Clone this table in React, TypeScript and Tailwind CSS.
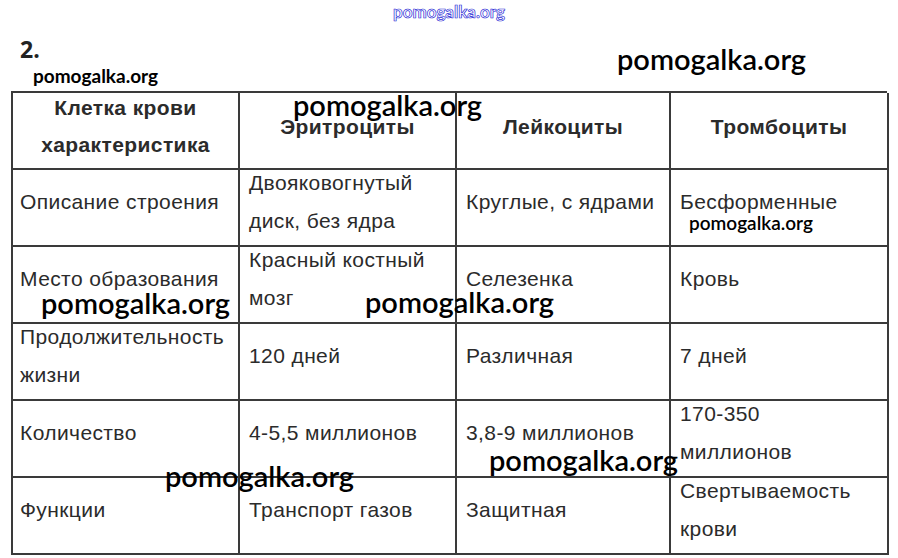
import React from 'react';

// each cell is a list of lines, wrapped as in the source document
const rows: string[][][] = [
  [['Описание строения'], ['Двояковогнутый', 'диск, без ядра'], ['Круглые, с ядрами'], ['Бесформенные']],
  [['Место образования'], ['Красный костный', 'мозг'], ['Селезенка'], ['Кровь']],
  [['Продолжительность', 'жизни'], ['120 дней'], ['Различная'], ['7 дней']],
  [['Количество'], ['4-5,5 миллионов'], ['3,8-9 миллионов'], ['170-350', 'миллионов']],
  [['Функции'], ['Транспорт газов'], ['Защитная'], ['Свертываемость', 'крови']],
];

const cell = 'flex h-[77px] border-b-2 border-r-2 border-[#3a3a3a]';
const body = "font-['Liberation_Sans',Arial,sans-serif] text-[21px] tracking-[0.4px] leading-[38px] text-[#2b2b2b]";
const head = "font-['Liberation_Sans',Arial,sans-serif] text-[21px] tracking-[0.4px] font-bold text-[#2b2b2b]";
const mark = "absolute font-['Lato',sans-serif] font-semibold text-black leading-none";

export default function App() {
  return (
    <div className="relative h-[558px] w-[898px] overflow-hidden bg-white">
      <div className="flex justify-center pt-[2px]">
        <span className="font-['Lato',sans-serif] text-[17px] font-bold leading-[20px] text-white [-webkit-text-stroke:0.7px_#2a2ad6]">
          pomogalka.org
        </span>
      </div>

      <div className="pl-[20px] pt-[14px] font-['Open_Sans',sans-serif] text-[23px] font-bold leading-[26px] text-[#222]">2.</div>
      <div className="pl-[33px] pt-[3px] font-['Lato',sans-serif] text-[19px] font-bold leading-[22px] text-black">pomogalka.org</div>

      <div className="ml-[11px] mt-[4px] grid w-[876px] grid-cols-[227px_217px_214px_218px] border-l-2 border-t-2 border-[#3a3a3a]">
        <div className={cell + ' flex-col items-center justify-center pb-[10px] leading-[37px] ' + head}>
          <span>Клетка крови</span>
          <span>характеристика</span>
        </div>
        {['Эритроциты', 'Лейкоциты', 'Тромбоциты'].map((h) => (
          <div key={h} className={cell + ' items-center justify-center pb-[8px] ' + head}>
            {h}
          </div>
        ))}
        {rows.map((r, i) =>
          r.map((lines, j) => (
            <div
              key={i + '-' + j}
              className={cell + ' flex-col justify-center pb-[12px] ' + (j === 0 ? 'pl-[7px] ' : 'pl-[9px] ') + body}
            >
              {lines.map((l) => (
                <span key={l} className="whitespace-nowrap">
                  {l}
                </span>
              ))}
            </div>
          ))
        )}
      </div>

      <span className={mark + ' left-[617px] top-[44px] text-[29px]'}>pomogalka.org</span>
      <span className={mark + ' left-[293px] top-[90px] text-[29px]'}>pomogalka.org</span>
      <span className={mark + ' left-[689px] top-[213px] text-[19px] font-bold'}>pomogalka.org</span>
      <span className={mark + ' left-[41px] top-[288px] text-[29px]'}>pomogalka.org</span>
      <span className={mark + ' left-[365px] top-[287px] text-[29px]'}>pomogalka.org</span>
      <span className={mark + ' left-[489px] top-[445px] text-[29px]'}>pomogalka.org</span>
      <span className={mark + ' left-[165px] top-[461px] text-[29px]'}>pomogalka.org</span>
    </div>
  );
}
